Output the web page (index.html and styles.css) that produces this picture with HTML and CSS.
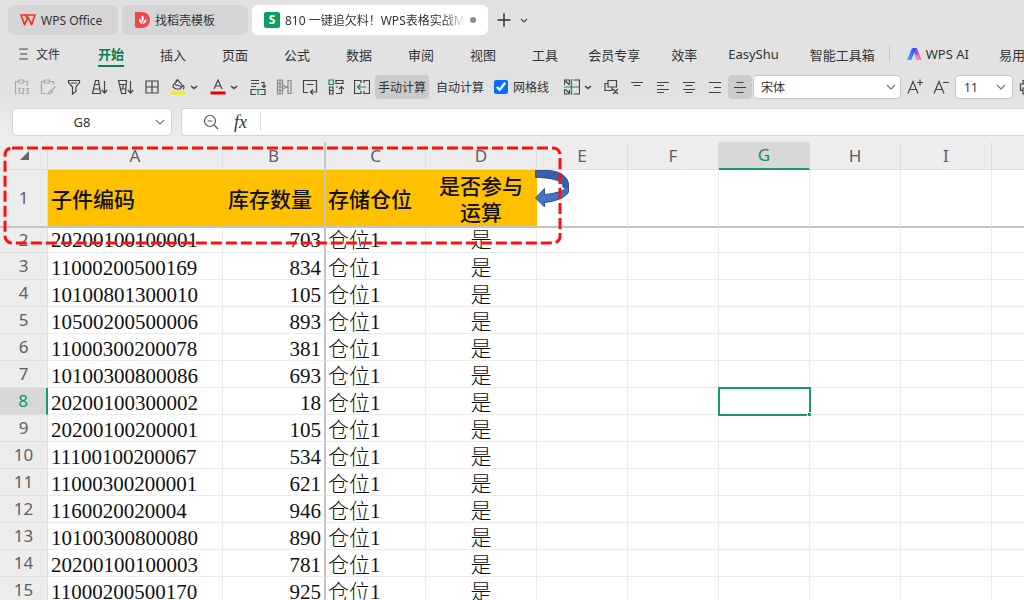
FILE: index.html
```html
<!DOCTYPE html>
<html lang="zh-CN">
<head>
  <meta charset="UTF-8" />
  <meta name="viewport" content="width=device-width, initial-scale=1.0"/>
  <title>WPS Office</title>
  <link rel="stylesheet" href="styles.css">
</head>
<body>

  <header>
    <div class="tabs">
      <button class="tab tab-home">
        <svg width="16" height="12" viewBox="0 0 16 12" fill="none" stroke="#f5321c" stroke-width="1.7" stroke-linejoin="round"><path d="M4 1H15L11.600 10.700 8 3.200 4.600 10.700 1 1H5.500L8 5.500"/></svg>
        WPS Office
      </button>
      <button class="tab tab-docer">
        <svg width="16" height="16" viewBox="0 0 16 16"><path fill="#f0474b" d="M1 0H8a8 8 0 0 1 0 16H3a2 2 0 0 1-2-2z"/><path fill="#fff" d="M8.500 3c1.700 2 1.700 4.500 0 7-1.500-2.400-1.500-5 0-7zM5 6.500c2 .6 3 2.400 3.300 5.500C6 11.500 4.800 9.500 5 6.500zM12.500 7c.1 3-1.200 4.700-3.700 5 .4-2.700 1.500-4.300 3.700-5z"/></svg>
        找稻壳模板
      </button>
      <button class="tab tab-active">
        <span class="sheet-logo">S</span>
        <span class="tab-title">810 一键追欠料！WPS表格实战M</span>
        <span class="unsaved"></span>
      </button>
      <button class="icon-btn" aria-label="新建"><svg width="14" height="14" viewBox="0 0 14 14" fill="none" stroke="#333" stroke-width="1.500"><path d="M7 0.500V13.500M.5 7H13.500"/></svg></button>
      <button class="tab-more" aria-label="更多"><svg class="chev" viewBox="0 0 8 5"><path d="M1 1l3 3 3-3"/></svg></button>
    </div>

    <nav>
      <a href="#" class="file"><svg width="9" height="12" viewBox="0 0 9 12" stroke="#444" stroke-width="1.200"><path d="M0 1H9M1 6H8M0 11H9"/></svg>文件</a>
      <div class="menu">
        <a href="#" class="current">开始</a>
        <a href="#">插入</a>
        <a href="#">页面</a>
        <a href="#">公式</a>
        <a href="#">数据</a>
        <a href="#">审阅</a>
        <a href="#">视图</a>
        <a href="#">工具</a>
      </div>
      <div class="menu-extra">
        <a href="#">会员专享</a>
        <a href="#">效率</a>
        <a href="#">EasyShu</a>
        <a href="#">智能工具箱</a>
      </div>
      <a href="#" class="ai">
        <svg width="15" height="12" viewBox="0 0 15 12">
          <defs>
            <linearGradient id="ai-blue" x1="0" y1="1" x2="1" y2="0"><stop offset="0" stop-color="#36b8ff"/><stop offset="1" stop-color="#3a3cf0"/></linearGradient>
            <linearGradient id="ai-pink" x1="0" y1="0" x2="1" y2="1"><stop offset="0" stop-color="#6a3cf5"/><stop offset="1" stop-color="#ff6fae"/></linearGradient>
          </defs>
          <path fill="url(#ai-pink)" d="M6 0h2.500c1 0 1.500.5 2 1.400L14.500 12H11c-1 0-1.600-.5-2-1.500z"/>
          <path fill="url(#ai-blue)" d="M4.500 1.200C5 .4 5.400 0 6.200 0H9L5 10.500C4.600 11.500 4 12 3 12H0z"/>
          <path fill="#ff7fc0" d="M7.500 7h4l1.800 5H11c-1 0-1.600-.5-2-1.500z"/>
        </svg>
        WPS AI
      </a>
      <a href="#">易用宝</a>
    </nav>

    <div class="toolbar">
      <button class="tool faded" aria-label="粘贴为数值"><svg viewBox="0 0 16 16"><path d="M3 14.500H1.500V2.500H4M10 2.500h3.500V7M4.500 1h5v3h-5zM4.500 10.500l1-1V15M8 10q2-1 2 .8L8 14.500h2.500M12 9.500h2.500L13 11.500q2 .2 1.500 2-.5 1.300-2.500.8"/></svg></button>
      <button class="tool faded" aria-label="选择性粘贴"><svg viewBox="0 0 16 16"><path d="M6 14.500H1.500V2.500H4M10 2.500h3.500V6M4.500 1h5v3h-5zM15.500 7.500l-4 4.500M11 11.500l1.500 1.500c-1 1.800-2.500 2-4.500 2 1-1 .8-2.800 3-3.500z"/></svg></button>
      <button class="tool" aria-label="筛选"><svg viewBox="0 0 16 16"><path d="M2.500 1.500h11v2L10 8v4.500L6.500 15V8L2.500 3.500zM5 4h6"/></svg></button>
      <button class="tool" aria-label="升序"><svg viewBox="0 0 16 16"><path d="M3.500 1.500h3L8.500 14.500H.5zM2.800 5.500h4.300M1.800 10h6M12.500 2v12M9.800 11l2.700 3 2.700-3"/></svg></button>
      <button class="tool" aria-label="降序"><svg viewBox="0 0 16 16"><path d="M.5 1.500h8L7.500 14.500h-4zM1.500 5.500H8M2.500 10h5.300M5 5.500V10M12.500 2v12M9.800 11l2.700 3 2.700-3"/></svg></button>
      <button class="tool" aria-label="边框"><svg viewBox="0 0 16 16"><path d="M2 2h12v12H2zM8 2v12M2 8h12"/></svg></button>
      <button class="tool split" aria-label="填充颜色"><svg viewBox="0 0 16 16"><path d="M8 1L3.500 5.500 3 8l3 2h4l2.500-3zM5 5.500l6 2M6 2.500q0-2 2-1.500M13 6q2 3 0 4"/><path class="bar-yellow" d="M.5 14h15"/></svg><svg class="chev bold" viewBox="0 0 8 5"><path d="M1 1l3 2.500L7 1"/></svg></button>
      <button class="tool split" aria-label="字体颜色"><svg viewBox="0 0 16 16"><path d="M4 10L8 1l4 9M5.500 7h5"/><path class="bar-red" d="M.5 14h15"/></svg><svg class="chev bold" viewBox="0 0 8 5"><path d="M1 1l3 2.500L7 1"/></svg></button>
      <button class="tool" aria-label="合并单元格"><svg viewBox="0 0 16 16"><path d="M1 1.500h8M1 4.500h8M1 7.500h5M11 3.500h3V8M12 6.500l2 2 2-2M6 10.500H1v5h5M10 10.500h5v5h-5"/><path class="green" d="M8 10v6M5.500 10.500h5"/></svg></button>
      <button class="tool" aria-label="分列"><svg class="dim" viewBox="0 0 16 16"><path d="M1.500 1h5v14h-5zM1.500 4.500h5M1.500 8h5M1.500 11.500h5M4 1v14M12 1.500h3v13h-3zM7.500 6l2 2-2 2"/><path class="green" d="M12 8H10"/></svg></button>
      <button class="tool" aria-label="自动换行"><svg viewBox="0 0 16 16"><path d="M6 13.500H1.500v-12h13V8M4.500 5.500h7M14.500 8v5H9M11 10.500L8.500 13l2.500 2.500"/></svg></button>
      <button class="tool" aria-label="转置"><svg viewBox="0 0 16 16"><path d="M8 1.500h7v3H8zM1.500 8v7h3.500V8zM1.500 11.500H5M8 14.500h5.500V8M11 10l2.500-2.500L16 10M8 8h2"/><path class="green" d="M1 1h4.500v4.500H1z"/></svg></button>
      <button class="tool" aria-label="插入单元格"><svg viewBox="0 0 16 16"><path d="M7 4V1.500H.5v13H7V12M10 4V1.500h5.500v13H10V12"/><path class="green" d="M12 8H4M6.500 5L3.500 8l3 3"/></svg></button>
      <button class="text-btn pressed">手动计算</button>
      <button class="text-btn">自动计算</button>
      <label class="check"><input type="checkbox" checked>网格线</label>
      <button class="tool split tight" aria-label="冻结窗格"><svg viewBox="0 0 16 16"><path d="M9.500 1h6v14h-6M.5 6V1h5M.5 10v5h5M1.500 2l4 4M1.500 10.500l4 4M5.500 1v4M5.500 11v4"/><path class="green" d="M0 8h16M7.500 0v16"/></svg><svg class="chev bold" viewBox="0 0 8 5"><path d="M1 1l3 2.500L7 1"/></svg></button>
      <button class="tool" aria-label="清除对象"><svg viewBox="0 0 16 16"><path d="M5 1.500h8.500V8H5zM5 4.500H2v7h7V8M10 10l5 5M15 10l-5 5"/></svg></button>
      <button class="tool" aria-label="顶端对齐"><svg viewBox="0 0 16 16"><path d="M2 3.500h12M4.500 6.500h7"/></svg></button>
      <button class="tool" aria-label="左对齐"><svg viewBox="0 0 16 16"><path d="M2 3.500h12M2 6.500h7M2 10.500h12M2 13.500h7"/></svg></button>
      <button class="tool" aria-label="水平居中"><svg viewBox="0 0 16 16"><path d="M2 3.500h12M4.500 6.500h7M2 10.500h12M4.500 13.500h7"/></svg></button>
      <button class="tool" aria-label="右对齐"><svg viewBox="0 0 16 16"><path d="M2 3.500h12M7 8.500h7M2 13.500h12"/></svg></button>
      <button class="tool narrow pressed" aria-label="垂直居中"><svg viewBox="0 0 16 16"><path d="M4.500 3.500h7M2 8.500h12M4.500 13.500h7"/></svg></button>
      <div class="select font-name">
        <select aria-label="字体"><option>宋体</option></select>
        <svg class="chev wide" viewBox="0 0 10 6"><path d="M1 1l4 4 4-4"/></svg>
      </div>
      <button class="tool" aria-label="增大字号"><svg viewBox="0 0 16 16"><path d="M1 14.500L6 2.500l5 12M2.500 10.500h7M10 3.500h6M13 .5v6"/></svg></button>
      <button class="tool" aria-label="减小字号"><svg viewBox="0 0 16 16"><path d="M1 14.500L6 2.500l5 12M2.500 10.500h7M10 3.500h6"/></svg></button>
      <div class="select font-size">
        <select aria-label="字号"><option>11</option></select>
        <svg class="chev wide" viewBox="0 0 10 6"><path d="M1 1l4 4 4-4"/></svg>
      </div>
      <button class="tool" aria-label="打印"><svg viewBox="0 0 16 16"><path d="M4 5V1.500h8V5M4 11.500H1.500V5h13v6.500H12M4 9h8v6H4z"/></svg></button>
    </div>

    <div class="formula-bar">
      <div class="name-box">
        <input type="text" value="G8" aria-label="名称框">
        <svg class="chev wide" viewBox="0 0 10 6"><path d="M1 1l4 4 4-4"/></svg>
      </div>
      <div class="formula">
        <svg width="16" height="16" viewBox="0 0 16 16" fill="none" stroke="#555" stroke-width="1.200"><circle cx="7" cy="7" r="5.500"/><path d="M4.500 7h5M11 11l4 4"/></svg>
        <span class="fx">fx</span>
        <input type="text" aria-label="编辑栏">
      </div>
    </div>
  </header>

  <main>
    <table>
      <colgroup>
        <col class="c-num"><col class="c-a"><col class="c-b"><col class="c-c"><col class="c-d">
        <col class="c-e" span="6">
      </colgroup>
      <thead>
        <tr><th><span class="corner"></span></th><th>A</th><th>B</th><th>C</th><th>D</th><th>E</th><th>F</th><th class="active">G</th><th>H</th><th>I</th><th></th></tr>
      </thead>
      <tbody>
        <tr class="title"><th>1</th><td>子件编码</td><td>库存数量</td><td>存储仓位</td><td>是否参与运算</td><td></td><td></td><td></td><td></td><td></td><td></td></tr>
        <tr class="first"><th>2</th><td>20200100100001</td><td>703</td><td>仓位1</td><td>是</td><td></td><td></td><td></td><td></td><td></td><td></td></tr>
        <tr><th>3</th><td>11000200500169</td><td>834</td><td>仓位1</td><td>是</td><td></td><td></td><td></td><td></td><td></td><td></td></tr>
        <tr><th>4</th><td>10100801300010</td><td>105</td><td>仓位1</td><td>是</td><td></td><td></td><td></td><td></td><td></td><td></td></tr>
        <tr><th>5</th><td>10500200500006</td><td>893</td><td>仓位1</td><td>是</td><td></td><td></td><td></td><td></td><td></td><td></td></tr>
        <tr><th>6</th><td>11000300200078</td><td>381</td><td>仓位1</td><td>是</td><td></td><td></td><td></td><td></td><td></td><td></td></tr>
        <tr><th>7</th><td>10100300800086</td><td>693</td><td>仓位1</td><td>是</td><td></td><td></td><td></td><td></td><td></td><td></td></tr>
        <tr><th class="active">8</th><td>20200100300002</td><td>18</td><td>仓位1</td><td>是</td><td></td><td></td><td class="selected"><span class="handle"></span></td><td></td><td></td><td></td></tr>
        <tr><th>9</th><td>20200100200001</td><td>105</td><td>仓位1</td><td>是</td><td></td><td></td><td></td><td></td><td></td><td></td></tr>
        <tr><th>10</th><td>11100100200067</td><td>534</td><td>仓位1</td><td>是</td><td></td><td></td><td></td><td></td><td></td><td></td></tr>
        <tr><th>11</th><td>11000300200001</td><td>621</td><td>仓位1</td><td>是</td><td></td><td></td><td></td><td></td><td></td><td></td></tr>
        <tr><th>12</th><td>1160020020004</td><td>946</td><td>仓位1</td><td>是</td><td></td><td></td><td></td><td></td><td></td><td></td></tr>
        <tr><th>13</th><td>10100300800080</td><td>890</td><td>仓位1</td><td>是</td><td></td><td></td><td></td><td></td><td></td><td></td></tr>
        <tr><th>14</th><td>20200100100003</td><td>781</td><td>仓位1</td><td>是</td><td></td><td></td><td></td><td></td><td></td><td></td></tr>
        <tr><th>15</th><td>11000200500170</td><td>925</td><td>仓位1</td><td>是</td><td></td><td></td><td></td><td></td><td></td><td></td></tr>
      </tbody>
    </table>

    <!-- drawn over the cells -->
    <svg class="curved-arrow" width="36" height="42" viewBox="0 0 36 42">
      <path fill="#3a5fa8" stroke="#2f528f" d="M.5 2.500H12C25 2.500 33.500 9 33.500 17L33 22 28 19C28 13 18 9.500.5 9.500z"/>
      <path fill="#4472c4" stroke="#2f528f" d="M33.500 17V24C30 30 20 33.500 9.500 34.500V39L.5 30 9.500 20.500V26.500C22 25.500 32 22 33.500 17z"/>
    </svg>
    <svg class="marquee" width="564" height="104">
      <rect x="5" y="7" width="555" height="95" rx="7"/>
    </svg>
  </main>

</body>
</html>
```
FILE: styles.css
```css
* {
  box-sizing: border-box;
}

body {
  font-family: "Noto Sans", "Noto Sans CJK SC", sans-serif;
  font-size: 12px;
  color: #333;
  background: #fff;
  margin: 0;
  height: 100vh;
  overflow: hidden;
}

button,
input,
select {
  font: inherit;
  color: inherit;
  background: none;
  border: none;
  margin: 0;
  padding: 0;
}

a {
  color: inherit;
  text-decoration: none;
  white-space: nowrap;
}

header {
  background: linear-gradient(#e2e2e2 70%, #ededed);
  overflow: hidden;
}

/* Document tabs */
.tabs {
  display: flex;
  align-items: center;
  gap: 4px;
  padding: 5px 8px 0;
}

.tab {
  display: flex;
  align-items: center;
  height: 30px;
  gap: 5px;
  padding: 0 12px;
  border-radius: 6px;
  background: #d5d5d5;
  white-space: nowrap;
}

.tab-home {
  width: 110px;
}

.tab-docer {
  width: 126px;
}

.tab-active {
  width: 236px;
  background: #fff;
}

.sheet-logo {
  width: 16px;
  flex-shrink: 0;
  border-radius: 2px;
  background: #0c9f60;
  color: #fff;
  font-weight: bold;
  line-height: 16px;
}

.tab-title {
  flex: 1;
  overflow: hidden;
  text-align: left;
  mask-image: linear-gradient(90deg, #000 88%, transparent);
}

.unsaved {
  width: 6px;
  height: 6px;
  border-radius: 50%;
  background: #8c8c8c;
}

.icon-btn {
  display: flex;
  padding: 0 5px;
}

.tab-more {
  display: flex;
}

.chev {
  width: 8px;
  height: 5px;
  fill: none;
  stroke: #444;
  stroke-width: 1.2;
}

.chev.wide {
  width: 10px;
  height: 6px;
  stroke: #777;
}

.toolbar .chev.bold {
  width: 8px;
  height: 5px;
  stroke-width: 1.6;
}

/* Menu */
nav {
  display: flex;
  align-items: center;
  height: 38px;
  font-size: 13px;
}

.file {
  display: flex;
  align-items: center;
  gap: 8px;
  width: 72px;
  margin-left: 19px;
  margin-right: 7px;
  font-size: 12px;
  flex-shrink: 0;
}

.file svg {
  flex-shrink: 0;
}

.menu {
  display: flex;
  align-items: center;
  gap: 36px;
}

.menu-extra {
  display: flex;
  gap: 31px;
  margin: 0 14px 0 30px;
}

.current {
  color: #0a8055;
  font-weight: bold;
  line-height: 22px;
  padding-top: 2px;
  border-bottom: 2px solid #0a8055;
}

.ai {
  display: flex;
  align-items: center;
  gap: 4px;
  height: 16px;
  margin-right: 30px;
  padding-left: 17px;
  border-left: 1px solid #c8c8c8;
}

/* Toolbar */
.toolbar {
  display: flex;
  align-items: center;
  height: 28px;
  padding-left: 9px;
}

.tool {
  display: flex;
  align-items: center;
  justify-content: center;
  flex-shrink: 0;
  width: 26px;
  height: 24px;
  border-radius: 4px;
}

.tool.narrow {
  width: 24px;
}

.tool svg {
  width: 16px;
  height: 16px;
  fill: none;
  stroke: #444;
  stroke-width: 1.2;
}

.tool.faded svg {
  stroke: #aaa;
}

.tool svg.dim {
  stroke: #888;
}

.tool .green {
  stroke: #128a5d;
}

.tool .bar-yellow {
  stroke: #f7f000;
  stroke-width: 3;
}

.tool .bar-red {
  stroke: #e80000;
  stroke-width: 3;
}

.split {
  justify-content: flex-start;
  width: 40px;
  gap: 4px;
  padding-left: 5px;
}

.split.tight {
  width: 39px;
}

.text-btn {
  flex-shrink: 0;
  height: 24px;
  padding: 0 3px;
  margin-right: 4px;
  border-radius: 4px;
}

.pressed {
  background: #cbcbcb;
}

.check {
  display: flex;
  align-items: center;
  flex-shrink: 0;
  gap: 5px;
  width: 68px;
  padding-left: 3px;
}

.check input {
  width: 14px;
  height: 14px;
  accent-color: #0a6cff;
}

.select,
.name-box {
  display: flex;
  align-items: center;
  flex-shrink: 0;
  background: #fff;
  border: 1px solid #c6c6c6;
  border-radius: 4px;
}

.select {
  height: 24px;
  padding: 0 4px 0 7px;
  margin: 0 1px;
}

.select select {
  appearance: none;
  flex: 1;
  min-width: 0;
}

.font-name {
  width: 148px;
}

.font-size {
  width: 58px;
  padding: 0 6px 0 8px;
}

/* Formula bar */
.formula-bar {
  display: flex;
  gap: 9px;
  height: 28px;
  margin: 7px 0 0 12px;
  padding-bottom: 0;
}

.name-box {
  width: 160px;
  padding: 0 6px 0 0;
  border-color: #d4d4d4;
}

.name-box input {
  flex: 1;
  min-width: 0;
  padding-right: 4px;
  text-align: center;
  font-size: 13px;
}

.formula {
  display: flex;
  flex: 1;
  align-items: center;
  padding-left: 21px;
  background: #fff;
  border: 1px solid #d4d4d4;
  border-right: none;
  border-radius: 4px 0 0 4px;
}

.fx {
  width: 26px;
  margin-left: 15px;
  font: italic 18px "Liberation Serif", serif;
}

.formula input {
  flex: 1;
  height: 18px;
  border-left: 1px solid #ddd;
}

/* Sheet */
main {
  position: relative;
  overflow: hidden;
  padding-top: 6px;
  background: #ededed;
}

table {
  table-layout: fixed;
  width: 1083px;
  border-collapse: separate;
  border-spacing: 0;
  background: #fff;
}

.c-num { width: 48px; }
.c-a { width: 175px; }
.c-b { width: 103px; }
.c-c { width: 100px; }
.c-d { width: 111px; }
.c-e { width: 91px; }

th {
  height: 27px;
  padding: 0;
  background: #ededed;
  color: #606060;
  font-size: 17px;
  font-weight: normal;
  line-height: 20px;
  border-right: 1px solid #dedede;
  border-bottom: 1px solid #dedede;
}

thead th {
  height: 28px;
}

.corner {
  display: block;
  margin: 0 0 0 20px;
  width: 9px;
  height: 9px;
  background: #666;
  clip-path: polygon(100% 0, 100% 100%, 0 100%);
}

th.active {
  color: #0e9262;
  background: #d8d8d8;
}

thead th.active {
  border-bottom: 2px solid #179a6c;
}

tbody th.active {
  border-right: 2px solid #179a6c;
}

td {
  height: 27px;
  padding: 3px 3px 0;
  font-family: "Liberation Serif", "Noto Sans CJK SC", serif;
  font-size: 21px;
  font-weight: 300;
  line-height: 22px;
  color: #111;
  white-space: nowrap;
  border-right: 1px solid #ebebeb;
  border-bottom: 1px solid #ebebeb;
}

td:nth-child(3) {
  text-align: right;
}

td:nth-child(4) {
  padding-left: 2px;
}

td:nth-child(5) {
  text-align: center;
}

/* frozen panes */
th:nth-child(3),
td:nth-child(3) {
  border-right: 2px solid #c4c4c4;
}

.title th,
.title td {
  height: 58px;
  border-bottom: 2px solid #c4c4c4;
}

.first th,
.first td {
  height: 25px;
  padding-top: 0;
}

.title td {
  line-height: 26px;
  font-weight: 500;
  white-space: normal;
}

.title td:nth-child(-n+5) {
  background: #ffc000;
  border-right-color: #ffc000;
}

.title td:nth-child(3) {
  padding-right: 12px;
  border-right-color: #c4c4c4;
}

td.selected {
  position: relative;
  outline: 2px solid #179a6c;
  outline-offset: -1px;
}

.handle {
  position: absolute;
  right: -2px;
  bottom: -2px;
  width: 4px;
  height: 4px;
  background: #179a6c;
  border-top: 1px solid #fff;
  border-left: 1px solid #fff;
}

.curved-arrow {
  position: absolute;
  left: 535px;
  top: 32px;
}

.marquee {
  position: absolute;
  left: 0;
  top: 5px;
}

.marquee rect {
  fill: none;
  stroke: #ff1010;
  stroke-width: 3;
  stroke-dasharray: 11 4;
}
```
